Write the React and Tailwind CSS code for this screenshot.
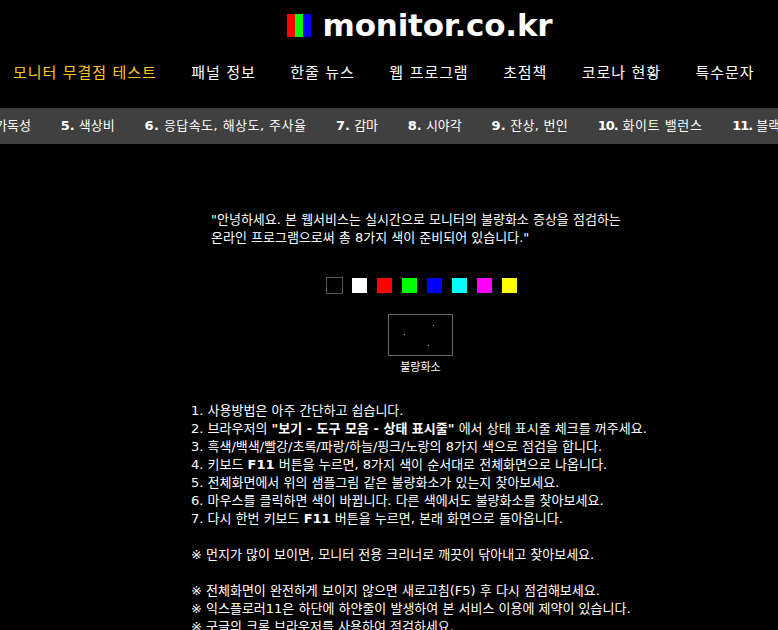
const font = { fontFamily: '"DejaVu Sans","Noto Sans CJK KR",sans-serif' };

const nav = ["패널 정보", "한줄 뉴스", "웹 프로그램", "초점책", "코로나 현황", "특수문자"];
const tabs = [
  ["4.", "가독성", "", ""],
  ["5.", "색상비", "", ""],
  ["6.", "응답속도, 해상도, 주사율", "tracking-[0.45px]", ""],
  ["7.", "감마", "", ""],
  ["8.", "시야각", "", ""],
  ["9.", "잔상, 번인", "tracking-[0.25px]", ""],
  ["10.", "화이트 밸런스", "tracking-[0.6px]", "tracking-[-1px]"],
  ["11.", "블랙 레벨", "", "tracking-[-1px]"],
];
const colors = ["bg-white", "bg-[#ff0000]", "bg-[#00ff00]", "bg-[#0000ff]", "bg-[#00ffff]", "bg-[#ff00ff]", "bg-[#ffff00]"];

function B({ children, className = "" }) {
  return <b className={`font-bold ${className}`}>{children}</b>;
}

export default function App() {
  return (
    <div className="h-[630px] overflow-hidden bg-black text-white" style={font}>
      <header className="flex h-[50px] items-center justify-center gap-[12px] pl-[61px]">
        <div className="flex h-[23px] w-[24px]">
          <div className="w-[8px] bg-[#ff0000]" />
          <div className="w-[8px] bg-[#00ff00]" />
          <div className="w-[8px] bg-[#0000ff]" />
        </div>
        <div className="text-[31px] font-bold leading-[50px] tracking-[-0.2px]">monitor.co.kr</div>
      </header>
      <nav className="flex h-[58px] items-start pl-[13px] pt-[13px] text-[15px] leading-[20px] tracking-[0.9px]">
        <a className="mr-[34.6px] whitespace-nowrap text-[#ffc61a]">모니터 무결점 테스트</a>
        {nav.map((n) => (
          <a key={n} className="mr-[34.6px] whitespace-nowrap">{n}</a>
        ))}
      </nav>
      <div className="flex h-[36px] items-center overflow-hidden bg-[#404040] text-[13px] text-white">
        <div className="-ml-[23px] flex shrink-0 gap-[29.7px] whitespace-nowrap">
          {tabs.map(([num, t, extra, numExtra]) => (
            <span key={num} className={extra}><B className={numExtra}>{num}</B> {t}</span>
          ))}
        </div>
      </div>
      <main className="text-[13px] leading-[18px]">
        <p className="ml-[211px] mt-[67px]">
          "안녕하세요. 본 웹서비스는 실시간으로 모니터의 불량화소 증상을 점검하는<br />
          온라인 프로그램으로써 총 8가지 색이 준비되어 있습니다."
        </p>
        <div className="ml-[326px] mt-[30px] flex h-[17px] items-center gap-[10px]">
          <div className="mr-[-1px] h-[17px] w-[17px] border border-[#555]" />
          {colors.map((c) => (
            <div key={c} className={`h-[15px] w-[15px] ${c}`} />
          ))}
        </div>
        <div className="ml-[388px] mt-[20px] relative h-[42px] w-[65px] border border-[#666]">
          <div className="absolute left-[44px] top-[10px] h-px w-px bg-[#999]" />
          <div className="absolute left-[15px] top-[19px] h-px w-px bg-[#999]" />
          <div className="absolute left-[39px] top-[30px] h-px w-px bg-[#999]" />
        </div>
        <div className="ml-[388px] mt-[3px] w-[65px] text-center text-[11px]">불량화소</div>
        <div className="ml-[191px] mt-[25px] whitespace-nowrap">
          <div>1. 사용방법은 아주 간단하고 쉽습니다.</div>
          <div>2. 브라우저의 <B>"보기 - 도구 모음 - 상태 표시줄"</B> 에서 상태 표시줄 체크를 꺼주세요.</div>
          <div>3. 흑색/백색/빨강/초록/파랑/하늘/핑크/노랑의 8가지 색으로 점검을 합니다.</div>
          <div>4. 키보드 <B>F11</B> 버튼을 누르면, 8가지 색이 순서대로 전체화면으로 나옵니다.</div>
          <div>5. 전체화면에서 위의 샘플그림 같은 불량화소가 있는지 찾아보세요.</div>
          <div>6. 마우스를 클릭하면 색이 바뀝니다. 다른 색에서도 불량화소를 찾아보세요.</div>
          <div>7. 다시 한번 키보드 <B>F11</B> 버튼을 누르면, 본래 화면으로 돌아옵니다.</div>
          <div className="mt-[18px]">※ 먼지가 많이 보이면, 모니터 전용 크리너로 깨끗이 닦아내고 찾아보세요.</div>
          <div className="mt-[18px]">※ 전체화면이 완전하게 보이지 않으면 새로고침(F5) 후 다시 점검해보세요.</div>
          <div>※ 익스플로러11은 하단에 하얀줄이 발생하여 본 서비스 이용에 제약이 있습니다.</div>
          <div>※ 구글의 크롬 브라우저를 사용하여 점검하세요.</div>
        </div>
      </main>
    </div>
  );
}
